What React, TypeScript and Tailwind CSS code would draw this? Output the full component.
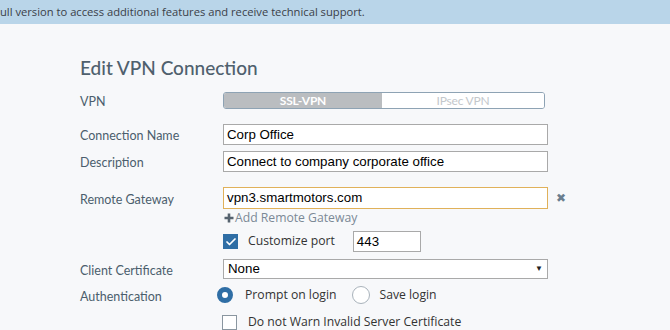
import { Check } from "lucide-react";

const labelClass =
  "pt-[4px] font-['Lato',sans-serif] text-[12.5px] text-[#4b5e6d] leading-none";
const inputClass =
  "h-[21px] w-[325px] border border-[#a9a9a9] bg-white px-[3px] font-['Liberation_Sans',Arial,sans-serif] text-[13.3px] text-black leading-[19px]";
const optionText = "font-['Open_Sans',sans-serif] text-[12.2px] text-[#333]";

function Row({
  label,
  height,
  className,
  children,
}: {
  label?: string;
  height: number;
  className?: string;
  children?: React.ReactNode;
}) {
  return (
    <div
      className={`flex items-center ${className ?? ""}`}
      style={{ height }}
    >
      <div className={`w-[143px] shrink-0 ${labelClass}`}>{label}</div>
      <div className="flex flex-1 items-center">{children}</div>
    </div>
  );
}

export default function App() {
  return (
    <div className="h-[330px] w-[670px] overflow-hidden bg-[#f7f8fa]">
      <div className="flex h-[24px] items-center bg-[#b9d5e9] font-['Open_Sans',sans-serif] text-[11.2px] text-[#3a4048]">
        ull version to access additional features and receive technical support.
      </div>

      <div className="pl-[80px]">
        <h1 className="mt-[31px] h-[26px] font-['Lato',sans-serif] text-[19px] leading-[26px] font-medium text-[#4f606d]">
          Edit VPN Connection
        </h1>

        <Row label="VPN" height={17} className="mt-[11px]">
          <div className="flex h-[17px] w-[322px] overflow-hidden rounded-[3px] border border-[#8ea3b4] font-['Lato',sans-serif] text-[12px] leading-none tracking-[-0.2px]">
            <div className="flex w-[158px] items-center justify-center bg-[#babdc0] font-bold text-white">
              SSL-VPN
            </div>
            <div className="flex flex-1 items-center justify-center bg-white text-[#c3c7cb]">
              IPsec VPN
            </div>
          </div>
        </Row>

        <Row label="Connection Name" height={21} className="mt-[15px]">
          <div className={inputClass}>Corp Office</div>
        </Row>

        <Row label="Description" height={21} className="mt-[6px]">
          <div className={inputClass}>Connect to company corporate office</div>
        </Row>

        <Row label="Remote Gateway" height={22} className="mt-[15px]">
          <div className={`${inputClass} h-[22px] border-[#e0b15a]`}>
            vpn3.smartmotors.com
          </div>
          <span className="ml-[8px] font-['DejaVu_Sans',sans-serif] text-[12px] font-bold text-[#6a7e8e]">
            ✖
          </span>
        </Row>

        <Row height={16} className="mt-[1px]">
          <span className="ml-[1px] flex items-center font-['Open_Sans',sans-serif] text-[12.2px] leading-none text-[#7b8996]">
            <svg width="10" height="10" viewBox="0 0 10 10" className="mr-[1px]">
              <path d="M5 0.5v9M0.5 5h9" stroke="#56636f" strokeWidth="2.6" />
            </svg>
            Add Remote Gateway
          </span>
        </Row>

        <Row height={21} className="mt-[5px]">
          <div className="flex h-[15px] w-[15px] items-center justify-center bg-[#2f6ea5]">
            <Check className="h-[12px] w-[12px] text-white" strokeWidth={3.5} />
          </div>
          <span className={`ml-[10px] ${optionText}`}>Customize port</span>
          <div className="ml-[18px] h-[21px] w-[68px] border border-[#a9a9a9] bg-white px-[3px] font-['Liberation_Sans',Arial,sans-serif] text-[13.3px] leading-[19px] text-black">
            443
          </div>
        </Row>

        <Row label="Client Certificate" height={20} className="mt-[7px]">
          <div className="flex h-[20px] w-[325px] items-center justify-between border border-[#a9a9a9] bg-white pr-[4px] pl-[4px] font-['Liberation_Sans',Arial,sans-serif] text-[13.3px] text-black">
            <span>None</span>
            <span className="text-[8px] text-[#222]">▼</span>
          </div>
        </Row>

        <Row label="Authentication" height={16} className="mt-[8px]">
          <div className={`-ml-[6px] flex items-center ${optionText}`}>
            <span className="h-[16px] w-[16px] rounded-full border-[5px] border-[#2f6ea5] bg-white" />
            <span className="ml-[12px]">Prompt on login</span>
            <span className="ml-[16px] h-[18px] w-[18px] rounded-full border border-[#a9b3bb] bg-white" />
            <span className="ml-[9px]">Save login</span>
          </div>
        </Row>

        <Row height={15} className="mt-[12px]">
          <span className="-ml-[1px] h-[15px] w-[15px] border border-[#8a96a0] bg-white" />
          <span className={`ml-[11px] ${optionText}`}>
            Do not Warn Invalid Server Certificate
          </span>
        </Row>
      </div>
    </div>
  );
}
